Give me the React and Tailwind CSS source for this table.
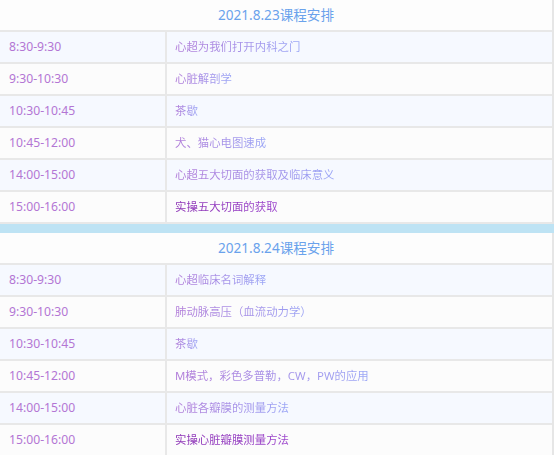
const days = [
  {
    title: '2021.8.23课程安排',
    rows: [
      ['8:30-9:30', '心超为我们打开内科之门'],
      ['9:30-10:30', '心脏解剖学'],
      ['10:30-10:45', '茶歇'],
      ['10:45-12:00', '犬、猫心电图速成'],
      ['14:00-15:00', '心超五大切面的获取及临床意义'],
      ['15:00-16:00', '实操五大切面的获取', true],
    ],
  },
  {
    title: '2021.8.24课程安排',
    rows: [
      ['8:30-9:30', '心超临床名词解释'],
      ['9:30-10:30', '肺动脉高压（血流动力学）'],
      ['10:30-10:45', '茶歇'],
      ['10:45-12:00', 'M模式，彩色多普勒，CW，PW的应用'],
      ['14:00-15:00', '心脏各瓣膜的测量方法'],
      ['15:00-16:00', '实操心脏瓣膜测量方法', true],
    ],
  },
];

function DayTable({ day }) {
  return (
    <div className="border-r-2 border-[#e6e6e6]">
      {/* Title row */}
      <div className="h-[32px] flex items-center justify-center bg-[#fdfdfd] border-b-2 border-[#e8e8e8] text-[13.6px] text-[#6aa2ec]">
        {day.title}
      </div>
      {day.rows.map(([time, topic, practice], i) => (
        <div
          key={time}
          className={`h-[32px] flex border-b-2 border-[#e8e8e8] ${
            i % 2 === 0 ? 'bg-[#f6f9ff]' : 'bg-[#fcfcfc]'
          }`}
        >
          <div className="w-[167px] shrink-0 flex items-center pl-[9px] border-r-2 border-[#e8e8e8] text-[12.2px] text-[#b376d4]">
            {time}
          </div>
          <div className="flex-1 flex items-center pl-[8px] text-[11.4px]">
            <span
              className={`inline-block bg-clip-text text-transparent bg-gradient-to-r ${
                practice
                  ? 'from-[#8a2fb4] to-[#9c45cc]'
                  : 'from-[#b07ad8] to-[#98a4f6]'
              }`}
            >
              {topic}
            </span>
          </div>
        </div>
      ))}
    </div>
  );
}

export default function App() {
  return (
    <div
      className="w-[554px] h-[455px] overflow-hidden bg-[#fdfdfd]"
      style={{ fontFamily: '"Noto Sans", "Noto Sans CJK SC", sans-serif' }}
    >
      <DayTable day={days[0]} />
      <div className="h-[9px] bg-[#bee3f4]" />
      <DayTable day={days[1]} />
    </div>
  );
}
